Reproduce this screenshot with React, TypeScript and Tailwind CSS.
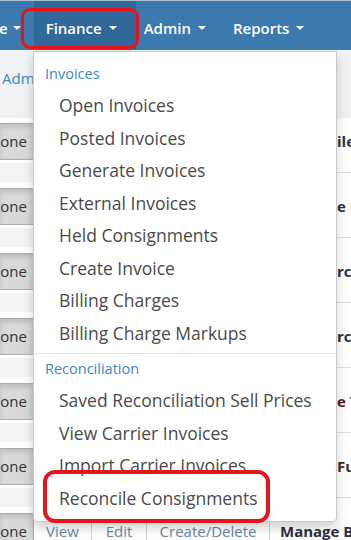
import React from "react";

interface Row {
  id: number;
  tail: string;
  tailColor: string;
}

const Caret: React.FC = () => (
  <span className="inline-block w-0 h-0 border-x-[4px] border-t-[4px] border-x-transparent border-t-white" />
);

const rows: Row[] = [
  { id: 1, tail: "iles", tailColor: "text-[#2b3142]" },
  { id: 2, tail: "e Notes", tailColor: "text-[#2b3142]" },
  { id: 3, tail: "rcharges", tailColor: "text-[#2b3142]" },
  { id: 4, tail: "rcodes", tailColor: "text-[#2b3142]" },
  { id: 5, tail: "e Tariffs", tailColor: "text-[#5a1f24]" },
  { id: 6, tail: "Fuel", tailColor: "text-[#3b2f2a]" },
];

const invoiceItems = [
  "Open Invoices",
  "Posted Invoices",
  "Generate Invoices",
  "External Invoices",
  "Held Consignments",
  "Create Invoice",
  "Billing Charges",
  "Billing Charge Markups",
];

const reconItems = [
  "Saved Reconciliation Sell Prices",
  "View Carrier Invoices",
  "Import Carrier Invoices",
  "Reconcile Consignments",
];

const App: React.FC = () => {
  return (
    /*전체 화면*/
    <div className="relative w-[351px] h-[540px] overflow-hidden bg-white font-['Open_Sans',sans-serif]">
      {/*상단 네비게이션*/}
      <div className="flex items-stretch h-[50px] bg-[#3b79ae] border-t border-[#a9c0d6] text-white text-[15px] font-semibold">
        <div className="flex items-center gap-[5px] -ml-[1px] pt-[5px]">
          <span>e</span>
          <Caret />
        </div>
        <div className="flex items-center gap-[7px] ml-[13px] pl-[12px] pr-[19px] pt-[5px] bg-[#2f6899]">
          <span>Finance</span>
          <Caret />
        </div>
        <div className="flex items-center gap-[7px] ml-[8px] pt-[5px]">
          <span>Admin</span>
          <Caret />
        </div>
        <div className="flex items-center gap-[7px] ml-[27px] pt-[5px]">
          <span>Reports</span>
          <Caret />
        </div>
      </div>

      {/*브레드크럼 영역*/}
      <div className="h-[68px] bg-[#f1f2f5] pt-[17px] pl-[2px] text-[15px] text-[#3a87c8]">
        Admin
      </div>

      {/*권한 테이블*/}
      <div>
        {[...rows, { id: 7, tail: "", tailColor: "" }].map((row) => (
          <div key={row.id} className="flex h-[65px]">
            <div className="flex flex-col w-[270px] shrink-0">
              <div className="flex h-[37px] mt-[5px] text-[15px]">
                <div className="w-[34px] flex items-center justify-end pr-[6px] bg-[#d9d9d9] border-y border-r border-[#adadad] shadow-[inset_0_3px_5px_rgba(0,0,0,0.125)] text-[#333] overflow-hidden">
                  None
                </div>
                <div className="w-[58px] flex items-center justify-center border-y border-r border-[#d4d4d4] text-[#6a87a6]">
                  View
                </div>
                <div className="w-[55px] flex items-center justify-center border-y border-r border-[#d4d4d4] text-[#6a87a6]">
                  Edit
                </div>
                <div className="w-[123px] flex items-center justify-center border-y border-r border-[#d4d4d4] text-[#6a87a6]">
                  Create/Delete
                </div>
              </div>
              <div className="w-[34px] h-[19px] mt-[3px] bg-[#f4f4f4]" />
            </div>
            <div className="flex-1 flex flex-col overflow-hidden whitespace-nowrap text-[15px] font-bold">
              <div className="h-[55px] border-b border-[#dcdcdc] pt-[12px]">
                {row.id === 7 ? (
                  <span className="pl-[10px] text-[#2b3142]">Manage Billing</span>
                ) : (
                  <span className={`pl-[67px] ${row.tailColor}`}>{row.tail}</span>
                )}
              </div>
            </div>
          </div>
        ))}
      </div>

      {/*금융 드롭다운 메뉴*/}
      <div className="absolute left-[33px] top-[51px] w-[304px] h-[471px] bg-white border border-[#c9c9c9] rounded-b-[4px] shadow-[0_6px_12px_rgba(0,0,0,0.18)] pt-[11px]">
        <div className="h-[22px] flex items-center pl-[11px] text-[14.5px] text-[#3a87c8]">Invoices</div>
        <ul className="mt-[4px]">
          {invoiceItems.map((item) => (
            <li key={item} className="h-[32.5px] flex items-center pl-[25px] text-[17.5px] text-[#4a4a4a]">
              {item}
            </li>
          ))}
        </ul>
        <div className="h-px bg-[#e5e5e5] my-[4px]" />
        <div className="h-[22px] mt-[3px] flex items-center pl-[11px] text-[14.5px] text-[#3a87c8]">Reconciliation</div>
        <ul className="mt-[4px]">
          {reconItems.map((item) => (
            <li key={item} className="h-[32.5px] flex items-center pl-[25px] text-[17.5px] text-[#4a4a4a]">
              {item}
            </li>
          ))}
        </ul>
      </div>

      {/*강조 표시 (빨간 테두리)*/}
      <div className="absolute left-[21px] top-[8px] w-[118px] h-[41px] border-[3px] border-[#e8141c] rounded-[9px]" />
      <div className="absolute left-[43px] top-[470px] w-[227px] h-[53px] border-[4px] border-[#e8141c] rounded-[12px]" />
    </div>
  );
};

export default App;
